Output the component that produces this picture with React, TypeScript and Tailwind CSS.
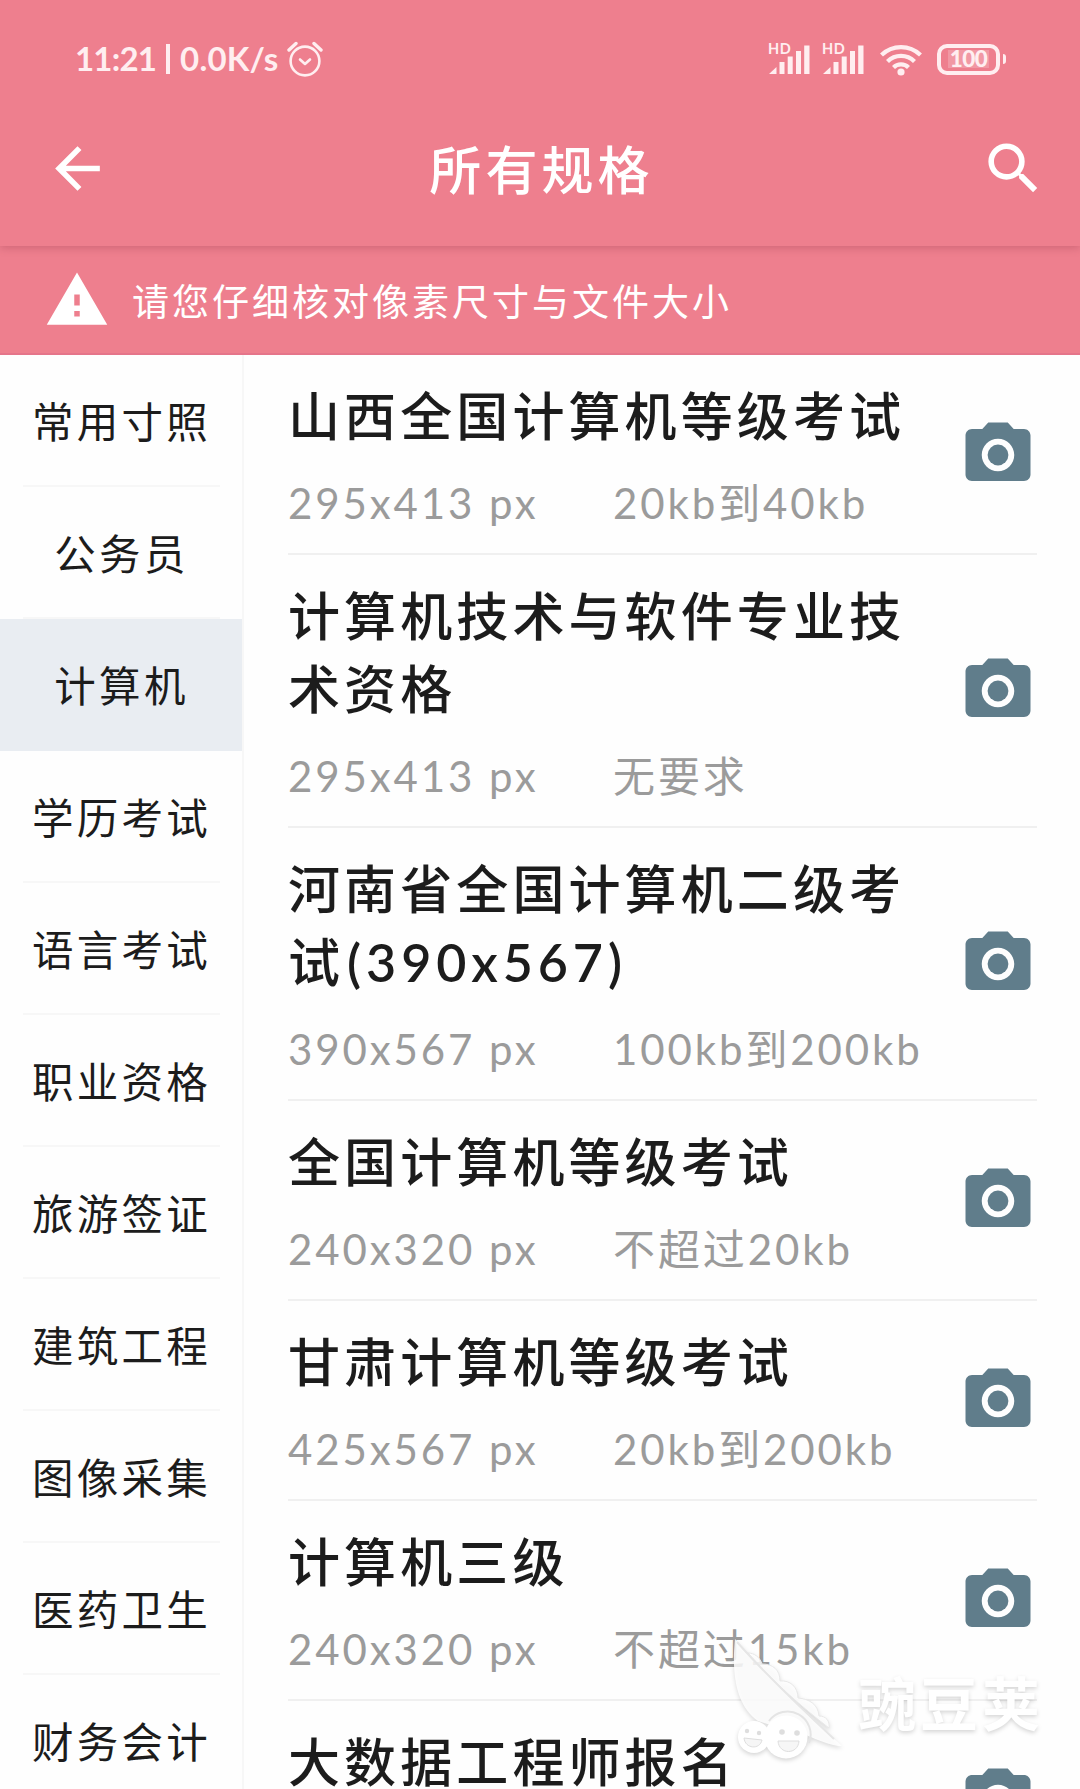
import { useState } from 'react';
import { MdArrowBack, MdCameraAlt, MdSearch, MdWarning } from 'react-icons/md';

type Spec = { title: string; dims?: string; pixels: string; size: string };

const categories = ['常用寸照', '公务员', '计算机', '学历考试', '语言考试', '职业资格', '旅游签证', '建筑工程', '图像采集', '医药卫生', '财务会计'];

const specs: Spec[] = [
    { title: '山西全国计算机等级考试', pixels: '295x413 px', size: '20kb到40kb' },
    { title: '计算机技术与软件专业技术资格', pixels: '295x413 px', size: '无要求' },
    { title: '河南省全国计算机二级考试', dims: '(390x567)', pixels: '390x567 px', size: '100kb到200kb' },
    { title: '全国计算机等级考试', pixels: '240x320 px', size: '不超过20kb' },
    { title: '甘肃计算机等级考试', pixels: '425x567 px', size: '20kb到200kb' },
    { title: '计算机三级', pixels: '240x320 px', size: '不超过15kb' },
    { title: '大数据工程师报名', pixels: '', size: '' },
];

function AlarmIcon() {
    return (
        <svg width="36" height="36" viewBox="0 0 36 36" fill="none" stroke="currentColor" strokeWidth="2.6" strokeLinecap="round" strokeLinejoin="round">
            <circle cx="18" cy="20" r="14.4" />
            <path d="M13 18.500l5 4.500 5-4.500" />
            <path d="M2 9l7-6.500M34 9l-7-6.500" strokeWidth="3.400" />
        </svg>
    );
}

function SignalIcon() {
    return (
        <div className="relative h-[32px] w-[42px]">
            <span className="absolute -top-px left-0 text-[14.5px] leading-[14px] font-bold tracking-[0.5px]">HD</span>
            <svg width="42" height="32" viewBox="0 0 42 32" fill="currentColor">
                <path d="M1 31l7.500-7v7z" />
                <rect x="11.500" y="19" width="5" height="12" />
                <rect x="19.700" y="13.500" width="5" height="17.500" />
                <rect x="28" y="8" width="5" height="23" />
                <rect x="36.200" y="2.500" width="5.300" height="28.500" />
            </svg>
        </div>
    );
}

function WifiIcon() {
    return (
        <svg width="42" height="33" viewBox="0 0 42 33" fill="none" stroke="currentColor" strokeWidth="4.200">
            <path d="M1.500 12a28 28 0 0 1 39 0" />
            <path d="M7.500 18.500a19 19 0 0 1 27 0" />
            <path d="M13.500 24.500a10.600 10.600 0 0 1 15 0" />
            <circle cx="21" cy="29" r="3.600" fill="currentColor" stroke="none" />
        </svg>
    );
}

function Battery() {
    return (
        <div className="flex items-center gap-[3px]">
            <div className="flex h-[31px] w-[63px] items-center justify-center rounded-[10px] border-[4px] border-current">
                <span className="flex h-[18px] w-[41px] items-center justify-center bg-white/20 text-[22.5px] leading-none font-black tracking-[-0.5px]">100</span>
            </div>
            <div className="h-[10px] w-[3px] rounded-r-full bg-current" />
        </div>
    );
}

function Watermark() {
    return (
        <div className="pointer-events-none absolute top-[1629px] left-[732px] flex drop-shadow-[0_2px_2px_rgba(0,0,0,0.16)]">
            <svg width="112" height="136" viewBox="0 0 112 136">
                <path d="M3 10C-1 50 6 78 26 92l50 16c-12-8 20 10 34 9C72 84 30 42 3 10z" fill="#fff" fillOpacity="0.85" />
                <path d="M16 24c6 0 12 4 14 11 11 0 18 6 18 17 10-1 18 6 18 17 11 1 20 6 21 18 7 0 11 5 10 12C70 78 40 52 16 24z" fill="#fff" fillOpacity="0.85" stroke="#e8e8e8" />
                <path d="M5 13c28 32 64 66 97 97" fill="none" stroke="#e6e6e6" strokeWidth="2" />
                <g fill="#fff">
                    <circle cx="22" cy="108" r="16" />
                    <circle cx="54" cy="108" r="21.500" />
                </g>
                <path d="M37 92a23 23 0 0 1 40 22" fill="none" stroke="#e4e4e4" strokeWidth="2" />
                <g fill="#dedede">
                    <circle cx="15" cy="102" r="2.200" />
                    <circle cx="27" cy="104" r="2.200" />
                    <circle cx="50" cy="103" r="2.800" />
                    <circle cx="65" cy="104" r="2.800" />
                </g>
                <g fill="#f6f6f6" stroke="#dedede">
                    <path d="M12 109l18 2c-2 10-17 9-18-2z" />
                    <path d="M46 112h21c-1 14-20 14-21 0z" />
                </g>
            </svg>
            <span className="mt-[39px] ml-[14px] text-[58px] leading-[72px] font-bold tracking-[4px] text-white">豌豆荚</span>
        </div>
    );
}

export default function App() {
    const [active, setActive] = useState('计算机');

    return (
        <div className="relative flex h-[1789px] w-[1080px] flex-col overflow-hidden bg-[#fefefe] font-[Lato,'Noto_Sans_CJK_SC',sans-serif] text-[#1c1c1c]">
            <header className="relative h-[246px] shrink-0 bg-[#ee7f8e] text-white shadow-[0_2px_8px_rgba(120,30,50,0.25)]">
                <div className="flex h-[118px] items-center justify-between pr-[74px] pl-[75px] text-[#ffeef0]">
                    <div className="flex items-center text-[33px] font-bold">
                        <span className="tracking-[-0.8px]">11:21</span>
                        <span className="mx-[10px] h-[30px] w-[4px] bg-current" />
                        <span className="mr-[8px] tracking-[0.2px]">0.0K/s</span>
                        <AlarmIcon />
                    </div>
                    <div className="flex items-center">
                        <SignalIcon />
                        <span className="w-[12px]" />
                        <SignalIcon />
                        <span className="w-[16px]" />
                        <WifiIcon />
                        <span className="w-[15px]" />
                        <Battery />
                    </div>
                </div>
                <div className="flex h-[101px] items-center justify-between pr-[33px] pl-[44px]">
                    <button><MdArrowBack className="size-[67px]" /></button>
                    <h1 className="mt-[2px] mr-[8px] text-[52px] font-medium tracking-[4.1px]">所有规格</h1>
                    <button><MdSearch className="size-[67px]" /></button>
                </div>
            </header>

            <div className="flex h-[109px] shrink-0 items-center border-b-2 border-[#e5758a] bg-[#ee7f8e] pl-[44px] text-white">
                <MdWarning className="mt-[1px] size-[66px]" />
                <p className="mt-[4px] ml-[22px] text-[37px] tracking-[3px]">请您仔细核对像素尺寸与文件大小</p>
            </div>

            <main className="flex min-h-0 flex-1">
                <nav className="w-[244px] shrink-0 border-r-2 border-[#f7f7f7]">
                    {categories.map((c) => (
                        <button key={c} onClick={() => setActive(c)} className={`block h-[132px] w-full pr-[22px] pl-[23px] ${c === active ? 'bg-[#e9edf2]' : ''}`}>
                            <span className={`flex h-full items-center justify-center border-b-2 pt-[4px] text-[41.5px] tracking-[3.3px] whitespace-nowrap ${c === active ? 'border-transparent' : 'border-[#f7f7f7]'}`}>{c}</span>
                        </button>
                    ))}
                </nav>

                <ul className="flex-1 pr-[43px] pl-[44px]">
                    {specs.map((s) => (
                        <li key={s.title} className="flex items-center justify-between border-b-2 border-[#f0f0f0] pt-[25px] pb-[18px]">
                            <div className="w-[630px]">
                                <h2 className="text-[52px] leading-[73px] font-medium tracking-[4.1px] break-all">
                                    {s.title}
                                    {s.dims && <span className="ml-[3px] font-semibold tracking-[4.9px]">{s.dims}</span>}
                                </h2>
                                <p className="mt-[19px] flex h-[63px] items-center text-[42px] leading-[63px] tracking-[2.9px] text-[#9b9b9b]">
                                    <span className="w-[325px] shrink-0">{s.pixels}</span>
                                    <span className="whitespace-nowrap">{s.size}</span>
                                </p>
                            </div>
                            <MdCameraAlt className="-mt-[6px] size-[78px] shrink-0 text-[#607d8b]" />
                        </li>
                    ))}
                </ul>
            </main>

            <Watermark />
        </div>
    );
}
